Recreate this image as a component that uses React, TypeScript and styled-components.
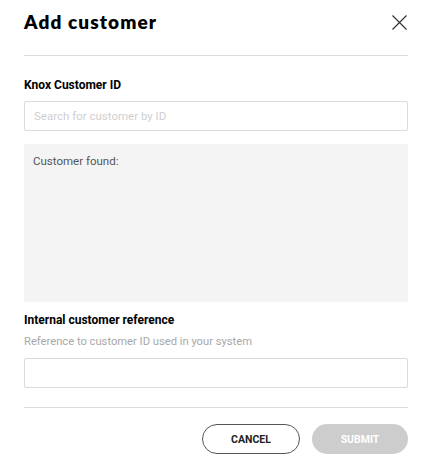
import React from "react";
import styled, { createGlobalStyle } from "styled-components";

const Global = createGlobalStyle`
  html, body { margin: 0; padding: 0; background: #fff; }
  body { font-family: Roboto, "Noto Sans", sans-serif; color: #000; }
  * { box-sizing: border-box; }
`;

const Dialog = styled.div`
  width: 432px;
  padding: 0 24px;
  display: flex;
  flex-direction: column;
`;

const Header = styled.div`
  height: 55px;
  display: flex;
  align-items: flex-start;
  justify-content: space-between;
  padding-top: 10px;
`;

const Title = styled.h1`
  margin: 0;
  font-family: "Lato", sans-serif;
  font-weight: 800;
  font-size: 19px;
  line-height: 24px;
  color: #000;
  letter-spacing: 1.1px;
`;

const CloseButton = styled.button`
  border: 0;
  background: none;
  padding: 0;
  margin-top: 5px;
  margin-right: 1px;
  width: 15px;
  height: 15px;
  display: flex;
  cursor: pointer;
`;

const Divider = styled.hr<{ $top?: number }>`
  margin: ${(p) => p.$top ?? 0}px 0 0;
  border: 0;
  height: 1px;
  background: #dcdcdc;
`;

const Label = styled.div<{ $top: number }>`
  margin-top: ${(p) => p.$top}px;
  font-size: 12px;
  font-weight: 700;
  line-height: 16px;
  color: #000;
`;

const Hint = styled.div`
  margin-top: 6px;
  font-size: 11.2px;
  line-height: 16px;
  color: #a8a8a8;
`;

const Input = styled.input<{ $top: number }>`
  margin-top: ${(p) => p.$top}px;
  height: 30px;
  width: 100%;
  border: 1px solid #dadada;
  border-radius: 2px;
  padding: 0 9px;
  font-family: inherit;
  font-size: 11.5px;
  outline: none;
  &::placeholder { color: #cfcfcf; }
`;

const ResultBox = styled.div`
  margin-top: 13px;
  height: 158px;
  background: #f4f4f4;
  padding: 9px 9px;
  font-size: 11.5px;
  line-height: 16px;
  color: #555;
`;

const Footer = styled.div`
  margin-top: 16px;
  display: flex;
  justify-content: flex-end;
  gap: 12px;
`;

const PillButton = styled.button<{ $primary?: boolean }>`
  height: 30px;
  width: ${(p) => (p.$primary ? 96 : 98)}px;
  border-radius: 15px;
  font-family: Roboto, sans-serif;
  font-weight: 700;
  font-size: 10.5px;
  text-transform: uppercase;
  border: ${(p) => (p.$primary ? "0" : "1px solid #555")};
  background: ${(p) => (p.$primary ? "#cdcdcd" : "#fff")};
  color: ${(p) => (p.$primary ? "#fff" : "#222")};
  cursor: ${(p) => (p.$primary ? "default" : "pointer")};
`;

export default function App() {
  return (
    <>
      <Global />
      <Dialog>
        <Header>
          <Title>Add customer</Title>
          <CloseButton aria-label="Close">
            <svg width="15" height="15" viewBox="0 0 15 15">
              <path d="M0.5 0.5 L14.5 14.5 M14.5 0.5 L0.5 14.5" stroke="#333" strokeWidth="1.2" fill="none" />
            </svg>
          </CloseButton>
        </Header>
        <Divider />
        <Label $top={21}>Knox Customer ID</Label>
        <Input $top={8} placeholder="Search for customer by ID" />
        <ResultBox>Customer found:</ResultBox>
        <Label $top={10}>Internal customer reference</Label>
        <Hint>Reference to customer ID used in your system</Hint>
        <Input $top={8} />
        <Divider $top={19} />
        <Footer>
          <PillButton>Cancel</PillButton>
          <PillButton $primary disabled>Submit</PillButton>
        </Footer>
      </Dialog>
    </>
  );
}
